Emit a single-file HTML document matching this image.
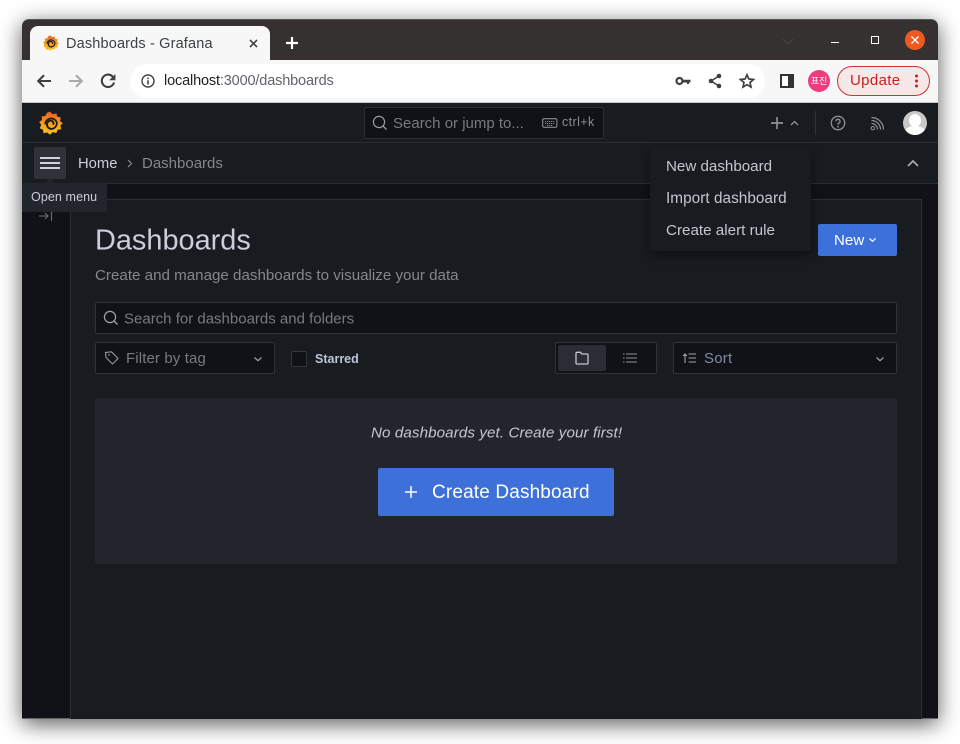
<!DOCTYPE html>
<html lang="en"><head><meta charset="utf-8"><title>Dashboards - Grafana</title>
<style>
html,body{margin:0;padding:0;width:960px;height:744px;overflow:hidden;background:#fff;font-family:"Liberation Sans","Noto Sans CJK KR",sans-serif}
div,span,svg{position:absolute;box-sizing:border-box}
.t{white-space:nowrap;line-height:20px}
</style></head><body>
<svg width="0" height="0" style="position:absolute">
<defs>
<linearGradient id="g" x1="0" y1="1" x2="0" y2="0"><stop offset="0" stop-color="#fcc81a"/><stop offset=".5" stop-color="#f99a1c"/><stop offset="1" stop-color="#ef5a28"/></linearGradient>
<symbol id="logo" viewBox="0 0 24 24">
<path fill="url(#g)" d="M11 0.5L13.6 3.2L17.4 2.4L18.2 5.6L21.8 6.4L21 10L23.8 12.2L21.4 14.6L22.2 18.2L18.8 18.6L17.2 22L13.8 21L11 23.8L8.2 21.4L4.6 22.2L4 18.8L0.8 17.2L2.2 13.8L0.2 11L3 9L2.8 5.4L6.2 5L8 1.8Z"/>
<path fill="none" stroke="#181b1f" stroke-width="1.7" stroke-linecap="round" d="M6.2 12.6A6 6 0 0 1 17.8 11.4A5.8 5.8 0 0 1 12.2 17.9"/>
<path fill="none" stroke="#181b1f" stroke-width="1.9" stroke-linecap="round" d="M12.2 17.9A4.4 4.4 0 0 1 8 13A3.8 3.8 0 0 1 12 9.6A2.8 2.8 0 0 1 14.4 13"/>
</symbol>
</defs></svg>

<!-- window shadow -->
<div style="left:22px;top:19px;width:916px;height:700px;border-radius:7px 7px 0 0;box-shadow:0 5px 22px rgba(0,0,0,.65)"></div>
<!-- titlebar -->
<div style="left:22px;top:19px;width:916px;height:41px;background:#353131;border-radius:7px 7px 0 0;border-top:1px solid #555"></div>
<!-- tab -->
<div style="left:30px;top:26px;width:240px;height:34px;background:#f7f7f7;border-radius:8px 8px 0 0"></div>
<svg style="left:43px;top:35px" width="16" height="16"><use href="#logo" width="16" height="16"/></svg>
<div class="t" style="left:66px;top:33px;font-size:14.5px;color:#3c4043;letter-spacing:.16px;transform:translateY(1px)">Dashboards - Grafana</div>
<svg style="left:248px;top:38px" width="11" height="11"><path d="M2 2L9 9M9 2L2 9" stroke="#444" stroke-width="1.6"/></svg>
<svg style="left:285px;top:36px" width="14" height="14"><path d="M7 1V13M1 7H13" stroke="#fff" stroke-width="2.2"/></svg>
<!-- window controls -->
<svg style="left:782px;top:38px" width="12" height="8"><path d="M1 1L6 6L11 1" stroke="#444" stroke-width="1.2" fill="none"/></svg>
<div style="left:831px;top:42px;width:8px;height:1px;background:#fff"></div>
<div style="left:871px;top:36px;width:8px;height:8px;border:1px solid #fff"></div>
<div style="left:905px;top:30px;width:20px;height:20px;border-radius:50%;background:#ee5a20"></div>
<svg style="left:910px;top:35px" width="10" height="10"><path d="M1.5 1.5L8.5 8.5M8.5 1.5L1.5 8.5" stroke="#fff" stroke-width="1.3"/></svg>
<!-- toolbar -->
<div style="left:22px;top:60px;width:916px;height:43px;background:#f7f7f7;border-bottom:1px solid #c8c8c8"></div>
<svg style="left:36px;top:73px" width="16" height="16"><path d="M15 8H2.5M8 2.2L2.2 8L8 13.8" stroke="#3c4043" stroke-width="2.1" fill="none"/></svg>
<svg style="left:68px;top:73px" width="16" height="16"><path d="M1 8H13.5M8 2.2L13.8 8L8 13.8" stroke="#aaa" stroke-width="2.1" fill="none"/></svg>
<svg style="left:100px;top:73px" width="16" height="16"><path d="M14 9.5A6.2 6.2 0 1 1 12.4 3.4L14 5" stroke="#3c4043" stroke-width="2.1" fill="none"/><path d="M15.4 1V7.2H9.2Z" fill="#3c4043"/></svg>
<div style="left:130px;top:64px;width:635px;height:34px;background:#fff;border-radius:17px"></div>
<svg style="left:141px;top:74px" width="14" height="14"><circle cx="7" cy="7" r="6" stroke="#444" stroke-width="1.4" fill="none"/><path d="M7 6.2V10.5M7 3.5V5.1" stroke="#444" stroke-width="1.6"/></svg>
<div class="t" style="left:164px;top:71px;font-size:14.5px;color:#202124;letter-spacing:-.15px">localhost<span style="position:static;color:#5f6368">:3000/dashboards</span></div>
<svg style="left:675px;top:75px" width="16" height="12"><circle cx="4.5" cy="6" r="3" stroke="#3c4043" stroke-width="2.2" fill="none"/><path d="M7 4.8H15.5V7.5H14V9H12V7.5H7Z" fill="#3c4043"/></svg>
<svg style="left:708px;top:73px" width="14" height="16"><path d="M11 3L3 8L11 13" stroke="#3c4043" stroke-width="1.5" fill="none"/><circle cx="11" cy="3" r="2.3" fill="#3c4043"/><circle cx="3" cy="8" r="2.3" fill="#3c4043"/><circle cx="11" cy="13" r="2.3" fill="#3c4043"/></svg>
<svg style="left:739px;top:73px" width="16" height="16"><path d="M8 1.8L9.9 6L14.5 6.5L11 9.5L12 14L8 11.7L4 14L5 9.5L1.5 6.5L6.1 6Z" stroke="#3c4043" stroke-width="1.7" fill="none"/></svg>
<div style="left:780px;top:74px;width:14px;height:14px;border:2px solid #333;border-right-width:6px;background:#fff"></div>
<div style="left:808px;top:70px;width:22px;height:22px;border-radius:50%;background:#ee3c7e"></div>
<div style="left:808px;top:70px;width:22px;height:22px;font-size:9px;line-height:22px;color:#fff;text-align:center;font-family:'Noto Sans CJK KR',sans-serif">표진</div>
<div style="left:837px;top:66px;width:93px;height:30px;border-radius:15px;border:1px solid #d03030;background:#f5e8e7"></div>
<div class="t" style="left:850px;top:71px;font-size:15px;color:#c5221f;letter-spacing:.35px">Update</div>
<svg style="left:914px;top:74px" width="5" height="16"><circle cx="2.5" cy="2" r="1.5" fill="#c5221f"/><circle cx="2.5" cy="7" r="1.5" fill="#c5221f"/><circle cx="2.5" cy="12" r="1.5" fill="#c5221f"/></svg>

<!-- Grafana app -->
<div style="left:22px;top:103px;width:916px;height:616px;background:#111217;overflow:hidden;border-bottom:1px solid #666"></div>
<div style="left:22px;top:103px;width:916px;height:40px;background:#181b1f;border-bottom:1px solid #2b2e33"></div>
<div style="left:22px;top:143px;width:916px;height:41px;background:#181b1f;border-bottom:1px solid #2b2e33"></div>
<svg style="left:39px;top:111px" width="24" height="24"><use href="#logo" width="24" height="24"/></svg>
<!-- global search -->
<div style="left:364px;top:107px;width:240px;height:32px;background:#111217;border:1px solid #2b2e33;border-radius:2px"></div>
<svg style="left:372px;top:115px" width="16" height="16"><circle cx="7" cy="7" r="5.6" stroke="#9a9ca2" stroke-width="1.2" fill="none"/><path d="M11 11L14.5 14.5" stroke="#9a9ca2" stroke-width="1.3"/></svg>
<div class="t" style="left:393px;top:113px;font-size:15px;color:#777a80;transform:translateY(1px)">Search or jump to...</div>
<svg style="left:542px;top:117px" width="16" height="12"><rect x=".7" y="1.7" width="14.2" height="8.6" rx="1.5" stroke="#8a8c92" fill="none" stroke-width="1.1"/><path d="M3 4.5H13M3 6.5H13M5 8.5H11" stroke="#8a8c92" stroke-dasharray="1.2 .8"/></svg>
<div class="t" style="left:562px;top:112px;font-size:12.5px;color:#8a8c92;letter-spacing:.4px">ctrl+k</div>
<!-- right icons -->
<svg style="left:770px;top:116px" width="14" height="14"><path d="M7 1V13M1 7H13" stroke="#8e9096" stroke-width="1.7"/></svg>
<svg style="left:790px;top:120px" width="9" height="6"><path d="M1 5L4.5 1.5L8 5" stroke="#8e9096" stroke-width="1.3" fill="none"/></svg>
<div style="left:815px;top:111px;width:1px;height:24px;background:#2f3237"></div>
<svg style="left:830px;top:115px" width="16" height="16"><circle cx="8" cy="8" r="6.7" stroke="#8e9096" stroke-width="1.3" fill="none"/><path d="M6 6.3A2 2 0 1 1 8.6 8.2C8 8.5 8 9 8 9.8" stroke="#8e9096" stroke-width="1.3" fill="none"/><circle cx="8" cy="11.6" r=".9" fill="#8e9096"/></svg>
<svg style="left:870px;top:116px" width="15" height="15"><circle cx="2.8" cy="12.2" r="1.7" stroke="#8e9096" fill="none"/><path d="M1.5 7.5A6 6 0 0 1 7.5 13.5M1.5 4.5A9 9 0 0 1 10.5 13.5M1.5 1.5A12 12 0 0 1 13.5 13.5" stroke="#8e9096" stroke-width="1.2" fill="none"/></svg>
<div style="left:903px;top:111px;width:24px;height:24px;border-radius:50%;background:#c9c9c9;overflow:hidden"><div style="left:6px;top:3px;width:12px;height:13px;border-radius:50%;background:#fff"></div><div style="left:1px;top:15px;width:22px;height:14px;border-radius:50%;background:#fff"></div></div>
<!-- breadcrumbs -->
<div class="t" style="left:78px;top:153.5px;font-size:14.8px;color:#ccccdc">Home</div>
<svg style="left:127px;top:159px" width="6" height="9"><path d="M1 1L4.5 4.5L1 8" stroke="#8e9096" stroke-width="1.1" fill="none"/></svg>
<div class="t" style="left:142px;top:153.5px;font-size:15px;color:#85878d">Dashboards</div>
<svg style="left:907px;top:159px" width="12" height="9"><path d="M1 7L6 2L11 7" stroke="#a8aab0" stroke-width="1.7" fill="none"/></svg>

<!-- sidebar and panel -->
<svg style="left:39px;top:211px" width="15" height="10"><path d="M0 5H9M6 2L9 5L6 8M12.5 0V10" stroke="#6c6e74" stroke-width="1.1" fill="none"/></svg>
<div style="left:70px;top:199px;width:852px;height:520px;background:#181b1f;border:1px solid #2b2e33;border-bottom:0"></div>
<div class="t" style="left:95px;top:222px;font-size:28.9px;line-height:36px;color:#ccccdc;transform:translateY(.5px)">Dashboards</div>
<div class="t" style="left:95px;top:265.5px;font-size:15.15px;color:#85878d">Create and manage dashboards to visualize your data</div>
<div style="left:818px;top:224px;width:79px;height:32px;background:#3d71d9;border-radius:2px"></div>
<div class="t" style="left:834px;top:231px;font-size:15px;font-weight:500;color:#fff;letter-spacing:.1px">New</div>
<svg style="left:868px;top:237px" width="9" height="6"><path d="M1.5 1.5L4.5 4.3L7.5 1.5" stroke="#fff" stroke-width="1.2" fill="none"/></svg>

<!-- search -->
<div style="left:95px;top:302px;width:802px;height:32px;background:#111217;border:1px solid #2f3237;border-radius:2px"></div>
<svg style="left:103px;top:310px" width="16" height="16"><circle cx="7" cy="7" r="5.6" stroke="#a0a2a8" stroke-width="1.2" fill="none"/><path d="M11 11L14.5 14.5" stroke="#a0a2a8" stroke-width="1.3"/></svg>
<div class="t" style="left:124px;top:309px;font-size:15px;color:#777a80;transform:translateY(.6px)">Search for dashboards and folders</div>
<!-- filter -->
<div style="left:95px;top:342px;width:180px;height:32px;background:#111217;border:1px solid #2f3237;border-radius:2px"></div>
<svg style="left:104px;top:350px" width="16" height="16"><path d="M1.5 2.5L7.5 1.8L14 8.5L8.5 14L2 7.5Z" stroke="#8e9096" stroke-width="1.2" fill="none" stroke-linejoin="round"/><circle cx="5" cy="5" r=".9" fill="#8e9096"/></svg>
<div class="t" style="left:126px;top:349px;font-size:15px;color:#777a80;letter-spacing:.12px">Filter by tag</div>
<svg style="left:253px;top:356px" width="10" height="7"><path d="M1.5 1.5L5 4.7L8.5 1.5" stroke="#a0a2a8" stroke-width="1.2" fill="none"/></svg>
<div style="left:291px;top:351px;width:16px;height:16px;background:#111217;border:1px solid #33363b;border-radius:2px"></div>
<div class="t" style="left:315px;top:349px;font-size:12.5px;font-weight:bold;color:#bcc6d8">Starred</div>
<!-- toggle -->
<div style="left:555px;top:342px;width:102px;height:32px;background:#111217;border:1px solid #2f3237;border-radius:2px"></div>
<div style="left:558px;top:345px;width:48px;height:26px;background:#2a2d33;border-radius:2px"></div>
<svg style="left:574px;top:350px" width="16" height="16"><path d="M2 3.2A1 1 0 0 1 3 2.3H6.5L8 4H13A1 1 0 0 1 14 5V13A1 1 0 0 1 13 14H3A1 1 0 0 1 2 13Z" stroke="#c4c6d0" stroke-width="1.3" fill="none"/></svg>
<svg style="left:622px;top:352px" width="16" height="12"><path d="M4 2H15M4 6H15M4 10H15M1 2H2.5M1 6H2.5M1 10H2.5" stroke="#8e9096" stroke-width="1.1"/></svg>
<!-- sort -->
<div style="left:673px;top:342px;width:224px;height:32px;background:#111217;border:1px solid #2f3237;border-radius:2px"></div>
<svg style="left:682px;top:352px" width="16" height="12"><path d="M3 11V2.5M1.2 4L3 2L4.8 4M6.5 2H14M6.5 6H14M6.5 10H14" stroke="#a0a2a8" stroke-width="1.1" fill="none"/></svg>
<div class="t" style="left:704px;top:349px;font-size:15px;color:#7f8ca3;letter-spacing:.2px">Sort</div>
<svg style="left:875px;top:356px" width="10" height="7"><path d="M1.5 1.5L5 4.7L8.5 1.5" stroke="#a0a2a8" stroke-width="1.2" fill="none"/></svg>

<!-- empty state -->
<div style="left:95px;top:398px;width:802px;height:166px;background:#22252b;border-radius:2px"></div>
<div class="t" style="left:371px;top:423px;font-size:15.2px;font-style:italic;color:#c4c6d0;letter-spacing:.08px;transform:translateY(.4px)">No dashboards yet. Create your first!</div>
<div style="left:378px;top:468px;width:236px;height:48px;background:#3d71d9;border-radius:2px"></div>
<svg style="left:404px;top:485px" width="14" height="14"><path d="M7 1V13M1 7H13" stroke="#fff" stroke-width="1.5"/></svg>
<div class="t" style="left:432px;top:483px;font-size:19px;font-weight:500;color:#fff;letter-spacing:.15px">Create Dashboard</div>

<!-- dropdown -->
<div style="left:650px;top:147px;width:161px;height:104px;background:#181b1f;border-radius:2px;box-shadow:0 4px 10px rgba(0,0,0,.45)"></div>
<div class="t" style="left:666px;top:156.5px;font-size:15.15px;color:#c4c6d2">New dashboard</div>
<div class="t" style="left:666px;top:188.5px;font-size:15.3px;color:#c4c6d2;letter-spacing:.05px">Import dashboard</div>
<div class="t" style="left:666px;top:220.5px;font-size:15.2px;color:#c4c6d2">Create alert rule</div>

<!-- hamburger and tooltip -->
<div style="left:34px;top:147px;width:32px;height:32px;background:#2f3238;border-radius:2px"></div>
<div style="left:40px;top:157px;width:20px;height:2px;background:#d0d2da"></div>
<div style="left:40px;top:162px;width:20px;height:2px;background:#d0d2da"></div>
<div style="left:40px;top:167px;width:20px;height:2px;background:#d0d2da"></div>
<div style="left:22px;top:183px;width:85px;height:29px;background:#22252b;border-radius:0 2px 2px 0"></div>
<svg style="left:44px;top:178px" width="12" height="6"><path d="M0 6L6 0L12 6Z" fill="#22252b"/></svg>
<div class="t" style="left:31px;top:187px;font-size:12.5px;color:#ccccdc;letter-spacing:.1px">Open menu</div>
</body></html>
